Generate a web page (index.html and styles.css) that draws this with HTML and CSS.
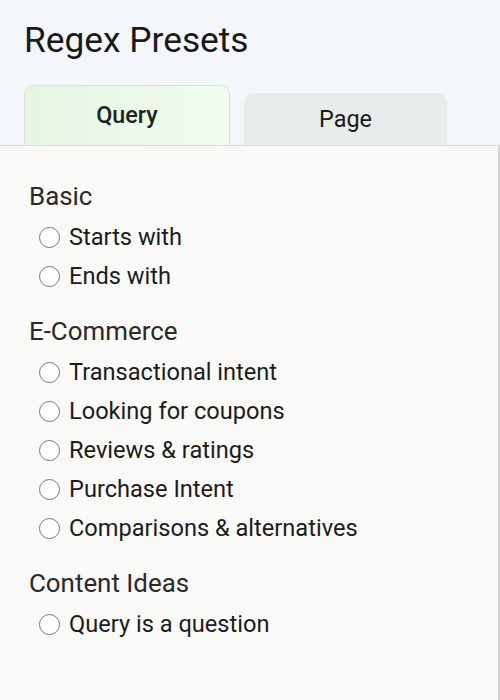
FILE: index.html
```html
<!DOCTYPE html>
<html>
<head>
<meta charset="utf-8">
<link rel="stylesheet" href="styles.css">
</head>
<body>
<div class="app">
  <h1 class="title">Regex Presets</h1>
  <div class="tabs">
    <div class="tab active">Query</div>
    <div class="tab">Page</div>
  </div>
  <div class="panel">
    <div class="group">
      <div class="group-title">Basic</div>
      <label class="opt"><span class="radio"></span><span>Starts with</span></label>
      <label class="opt"><span class="radio"></span><span>Ends with</span></label>
    </div>
    <div class="group">
      <div class="group-title">E-Commerce</div>
      <label class="opt"><span class="radio"></span><span>Transactional intent</span></label>
      <label class="opt"><span class="radio"></span><span>Looking for coupons</span></label>
      <label class="opt"><span class="radio"></span><span>Reviews &amp; ratings</span></label>
      <label class="opt"><span class="radio"></span><span>Purchase Intent</span></label>
      <label class="opt"><span class="radio"></span><span>Comparisons &amp; alternatives</span></label>
    </div>
    <div class="group">
      <div class="group-title">Content Ideas</div>
      <label class="opt"><span class="radio"></span><span>Query is a question</span></label>
    </div>
  </div>
</div>
</body>
</html>
```
FILE: styles.css
```css
html, body {
  margin: 0;
  padding: 0;
  height: 100%;
}
body {
  background: #f3f6fb;
  font-family: Roboto, "Liberation Sans", sans-serif;
  color: #1c1c1c;
}
.app {
  display: flex;
  flex-direction: column;
  height: 100%;
}
.title {
  margin: 0;
  padding: 19px 0 0 24px;
  font-size: 35.3px;
  line-height: 42px;
  font-weight: 400;
  color: #1a1a1a;
}
.tabs {
  display: flex;
  align-items: flex-end;
  gap: 14px;
  padding: 24px 0 0 24px;
}
.tab {
  width: 203px;
  height: 52px;
  line-height: 52px;
  text-align: center;
  font-size: 23.4px;
  background: #e8eceb;
  border-radius: 9px 9px 0 0;
  color: #1a1a1a;
}
.tab.active {
  width: 204px;
  height: 59px;
  line-height: 59px;
  font-weight: 500;
  color: #222;
  background: linear-gradient(90deg, #e4f5e1, #f1fcef);
  border: 1px solid #dcdfdc;
  border-bottom: none;
}
.panel {
  flex: 1;
  background: #f9f9f7;
  border-top: 1px solid #dedede;
  border-right: 2px solid #d2d2d2;
  padding: 15px 0 0 29px;
}
.group {
  margin-top: 20px;
}
.group-title {
  font-size: 25.9px;
  line-height: 30px;
  color: #2a2a2a;
  margin-bottom: 7px;
}
.opt {
  display: flex;
  align-items: center;
  gap: 9px;
  height: 39px;
  padding-left: 10px;
  font-size: 23.6px;
  line-height: 39px;
  color: #1c1c1c;
}
.radio {
  width: 19px;
  height: 19px;
  border: 1.6px solid #777;
  border-radius: 50%;
  background: #fff;
  flex: none;
}
```
